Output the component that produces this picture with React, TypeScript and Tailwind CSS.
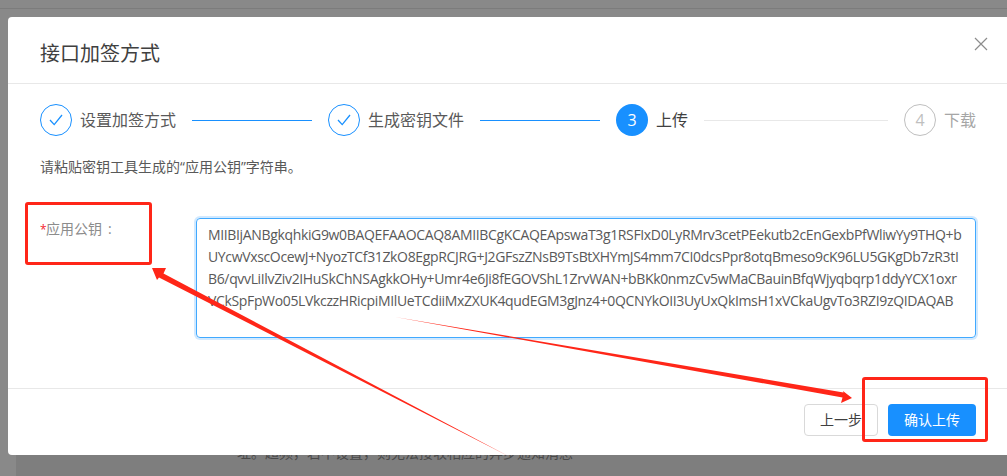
const KEY_LINES = [
  "MIIBIjANBgkqhkiG9w0BAQEFAAOCAQ8AMIIBCgKCAQEApswaT3g1RSFIxD0LyRMrv3cetPEekutb2cEnGexbPfWliwYy9THQ+b",
  "UYcwVxscOcewJ+NyozTCf31ZkO8EgpRCJRG+J2GFszZNsB9TsBtXHYmJS4mm7CI0dcsPpr8otqBmeso9cK96LU5GKgDb7zR3tI",
  "B6/qvvLiIlvZiv2IHuSkChNSAgkkOHy+Umr4e6Ji8fEGOVShL1ZrvWAN+bBKk0nmzCv5wMaCBauinBfqWjyqbqrp1ddyYCX1oxr",
  "VCkSpFpWo05LVkczzHRicpiMIlUeTCdiiMxZXUK4qudEGM3gJnz4+0QCNYkOII3UyUxQkImsH1xVCkaUgvTo3RZI9zQIDAQAB",
];

const FONT = "font-['Open_Sans','Noto_Sans_CJK_SC',sans-serif]";

function DoneStep({ label }: { label: string }) {
  return (
    <div className="flex items-center gap-2 shrink-0">
      <div className="w-8 h-8 rounded-full border border-[#1890ff] flex items-center justify-center">
        <svg width="14" height="12" viewBox="0 0 14 12" fill="none" stroke="#1890ff" strokeWidth="1.3">
          <path d="M1 6l4.2 4.6L13 1" />
        </svg>
      </div>
      <span className="text-base text-[#595959]">{label}</span>
    </div>
  );
}

export default function App() {
  return (
    <div className={`relative h-[476px] w-full overflow-hidden bg-[#898989] ${FONT}`}>
      <div className="h-[9px] border-b border-[#7c7c7c]"></div>

      {/* modal */}
      <div className="relative z-10 ml-2 mt-2 h-[438px] bg-white rounded-l flex flex-col">
        <div className="h-[67px] shrink-0 border-b border-[#e8e8e8] pl-8 pr-[19px] flex justify-between">
          <h1 className="text-xl leading-[74px] text-[#404040]">接口加签方式</h1>
          <svg className="mt-5" width="14" height="14" viewBox="0 0 14 14" fill="none" stroke="#8c8c8c" strokeWidth="1.2">
            <path d="M1 1l12 12M13 1L1 13" />
          </svg>
        </div>

        <div className="flex-1 pt-[20px] pl-8 pr-[23px]">
          <div className="flex items-center">
            <DoneStep label="设置加签方式" />
            <div className="w-[120px] h-px bg-[#1890ff] ml-4 mr-4"></div>
            <DoneStep label="生成密钥文件" />
            <div className="w-[120px] h-px bg-[#1890ff] ml-4 mr-4"></div>
            <div className="flex items-center gap-2 shrink-0">
              <div className="w-8 h-8 rounded-full bg-[#1890ff] text-white text-base flex items-center justify-center">3</div>
              <span className="text-base text-[#404040]">上传</span>
            </div>
            <div className="w-[184px] h-px bg-[#e8e8e8] ml-4 mr-4"></div>
            <div className="flex items-center gap-2 shrink-0">
              <div className="w-8 h-8 rounded-full border border-[#bfbfbf] text-[#bfbfbf] text-base flex items-center justify-center">4</div>
              <span className="text-base text-[#a6a6a6]">下载</span>
            </div>
          </div>

          <p className="mt-[20px] text-sm leading-[22px] text-[#595959]">请粘贴密钥工具生成的“应用公钥”字符串。</p>

          <div className="mt-[40px] flex">
            <label className="w-[156px] shrink-0 text-sm leading-[22px] text-[#8c8c8c]">
              <span className="inline-block w-[6px] text-xs text-[#f5222d]">*</span>应用公钥<span className="ml-[6px]">:</span>
            </label>
            <div className="w-[780px] h-[120px] border border-[#40a9ff] rounded-sm shadow-[0_0_0_2px_rgba(24,144,255,0.2)] pl-[11px] pt-[5px] text-sm leading-[22px] tracking-[-0.35px] text-[#595959] whitespace-nowrap">
              {KEY_LINES.map((l) => (
                <div key={l}>{l}</div>
              ))}
            </div>
          </div>
        </div>

        <div className="h-[67px] shrink-0 border-t border-[#e8e8e8] pt-[15px] pr-[31px] flex justify-end gap-[10px]">
          <button className="w-[74px] h-8 border border-[#d9d9d9] rounded text-sm text-[#404040] bg-white">上一步</button>
          <button className="w-[88px] h-8 rounded text-sm text-white bg-[#1890ff]">确认上传</button>
        </div>
      </div>

      {/* page text behind the modal */}
      <div className="ml-4 -mt-[13px] h-[40px] bg-[#7e7e7e] pl-[221px]">
        <p className="text-sm leading-[22px] text-[#4a4a4a]">址。超频，若不设置，则无法接收相应的异步通知消息</p>
      </div>

      {/* screenshot annotations */}
      <div className="absolute left-[25px] top-[202px] z-20 w-[127px] h-[63px] border-[3px] border-[#ff2618] rounded-[3px]"></div>
      <div className="absolute left-[862px] top-[377px] z-20 w-[126px] h-[65px] border-[3px] border-[#ff2618] rounded-[3px]"></div>
      <svg className="absolute left-0 top-0 z-20 pointer-events-none" width="1007" height="476" viewBox="0 0 1007 476" fill="#ff2618">
        <polygon points="152,268 166,268 163.5,273.5 512,458 159,277.5 157,280" />
        <polygon points="395,317 843.5,392.5 843,391 852,398 841,403 842.5,397.5" />
      </svg>
    </div>
  );
}
